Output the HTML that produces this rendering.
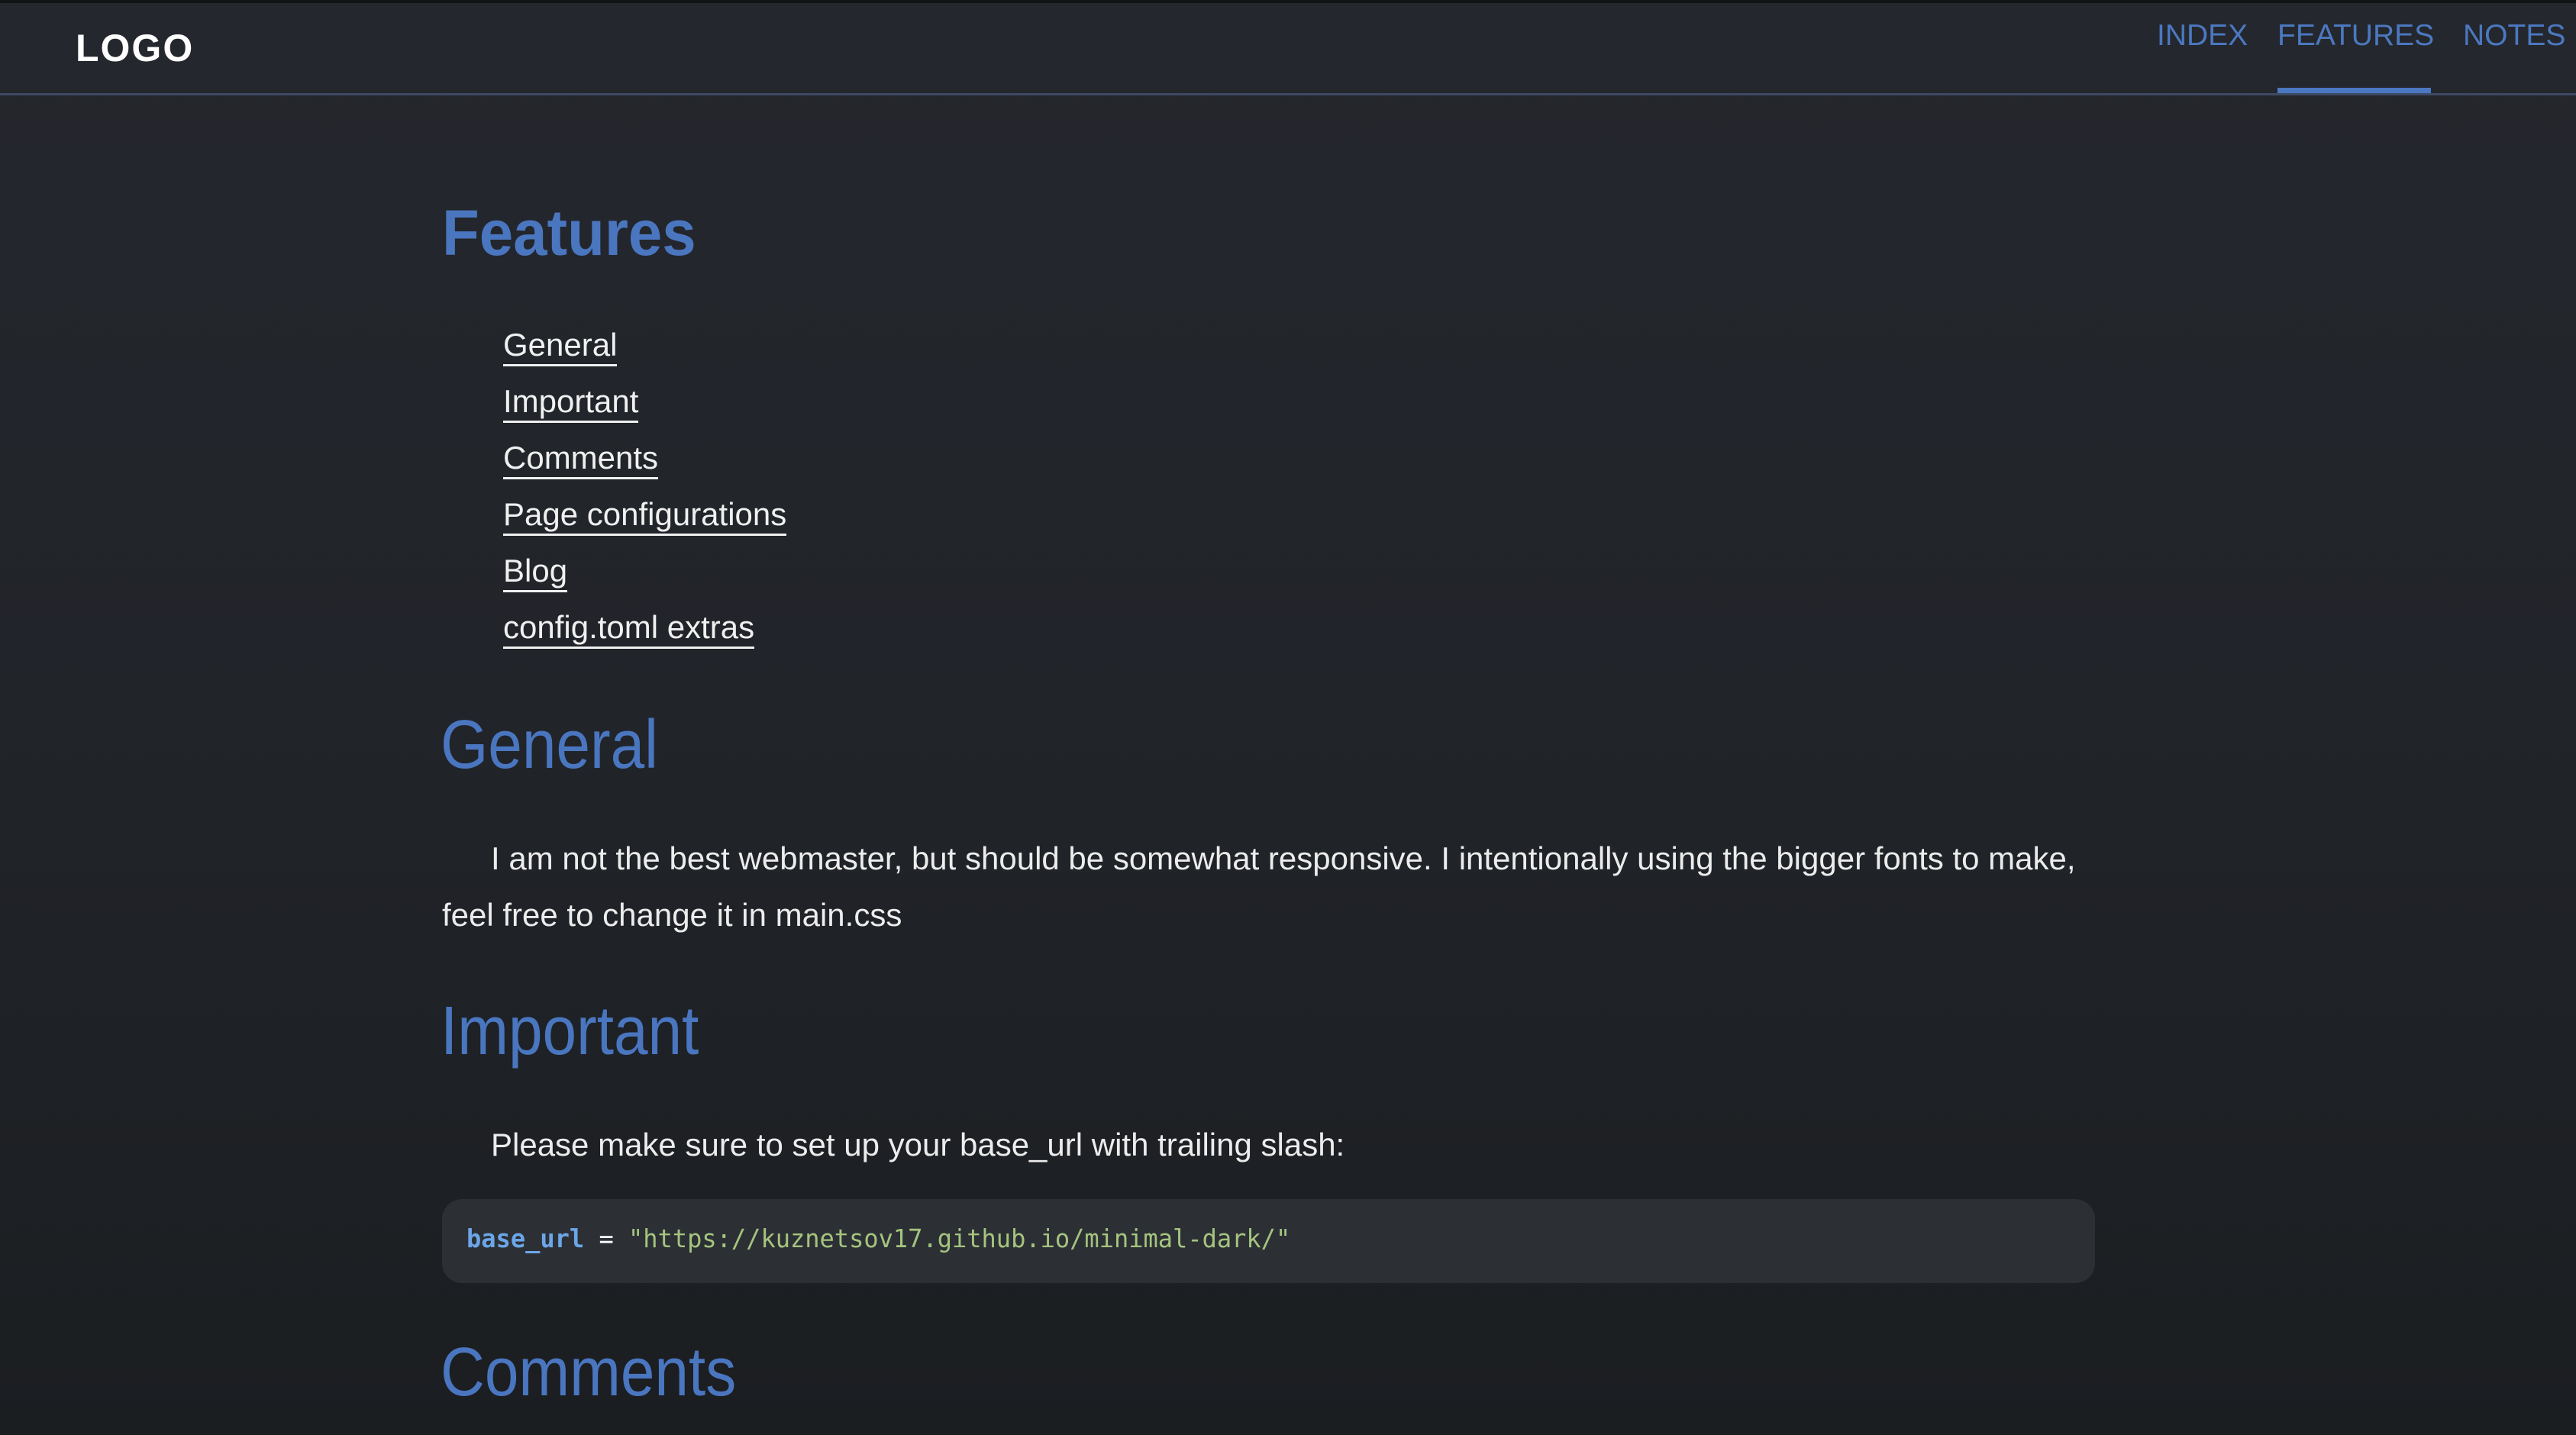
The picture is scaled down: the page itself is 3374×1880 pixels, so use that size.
<!DOCTYPE html>
<html><head><meta charset="utf-8"><style>
html,body{margin:0;padding:0}
body{width:3374px;height:1880px;overflow:hidden;position:relative;font-family:"Liberation Sans",Arial,sans-serif;background:linear-gradient(#24272d 0%,#212429 50%,#1b1e21 100%);}
.t{position:absolute;white-space:nowrap;line-height:1}
.top{position:absolute;left:0;top:0;width:3374px;height:4px;background:#121315}
.hdr{position:absolute;left:0;top:122px;width:3374px;height:3px;background:#3c4a64}
.logo{left:99px;top:38px;font-size:50px;font-weight:bold;color:#fff;letter-spacing:2px;transform:scaleX(1.0);transform-origin:left}
.nav{top:27px;font-size:39px;color:#4b78c0}
.ul{position:absolute;left:2983px;top:115px;width:201px;height:7px;background:#4b78c0}
.h1{left:579px;top:263px;font-size:84px;font-weight:bold;color:#4a76c0;transform:scaleX(0.95);transform-origin:left}
.h2{left:577px;font-size:90px;font-weight:normal;color:#4a76c0;transform:scaleX(0.89);transform-origin:left}
.li{left:659px;font-size:42px;color:#f0f0f0;border-bottom:3px solid #f0f0f0;padding-bottom:4px}
.p{font-size:42px;color:#ececec}
.code{position:absolute;left:579px;top:1571px;width:2165px;height:110px;background:#2c3035;border-radius:26px}
.c{left:611px;top:1606px;font-family:"DejaVu Sans Mono","Liberation Mono",monospace;font-size:33px;color:#fff;transform:scaleX(0.97);transform-origin:left}
</style></head><body>
<div class="top"></div>
<div class="t logo">LOGO</div>
<div class="t nav" style="left:2825px">INDEX</div>
<div class="t nav" style="left:2983px">FEATURES</div>
<div class="t nav" style="left:3226px">NOTES</div>
<div class="ul"></div>
<div class="hdr"></div>

<div class="t h1">Features</div>
<div class="t li" style="top:431px">General</div>
<div class="t li" style="top:505px">Important</div>
<div class="t li" style="top:579px">Comments</div>
<div class="t li" style="top:653px">Page configurations</div>
<div class="t li" style="top:727px">Blog</div>
<div class="t li" style="top:801px">config.toml extras</div>

<div class="t h2" style="top:931px">General</div>
<div class="t p" style="left:643px;top:1104px">I am not the best webmaster, but should be somewhat responsive. I intentionally using the bigger fonts to make,</div>
<div class="t p" style="left:579px;top:1178px">feel free to change it in main.css</div>

<div class="t h2" style="top:1306px">Important</div>
<div class="t p" style="left:643px;top:1479px">Please make sure to set up your base_url with trailing slash:</div>
<div class="code"></div>
<div class="t c"><b style="color:#6ca6e8">base_url</b> = <span style="color:#a5c47e">"https://kuznetsov17.github.io/minimal-dark/"</span></div>

<div class="t h2" style="top:1753px">Comments</div>
</body></html>
